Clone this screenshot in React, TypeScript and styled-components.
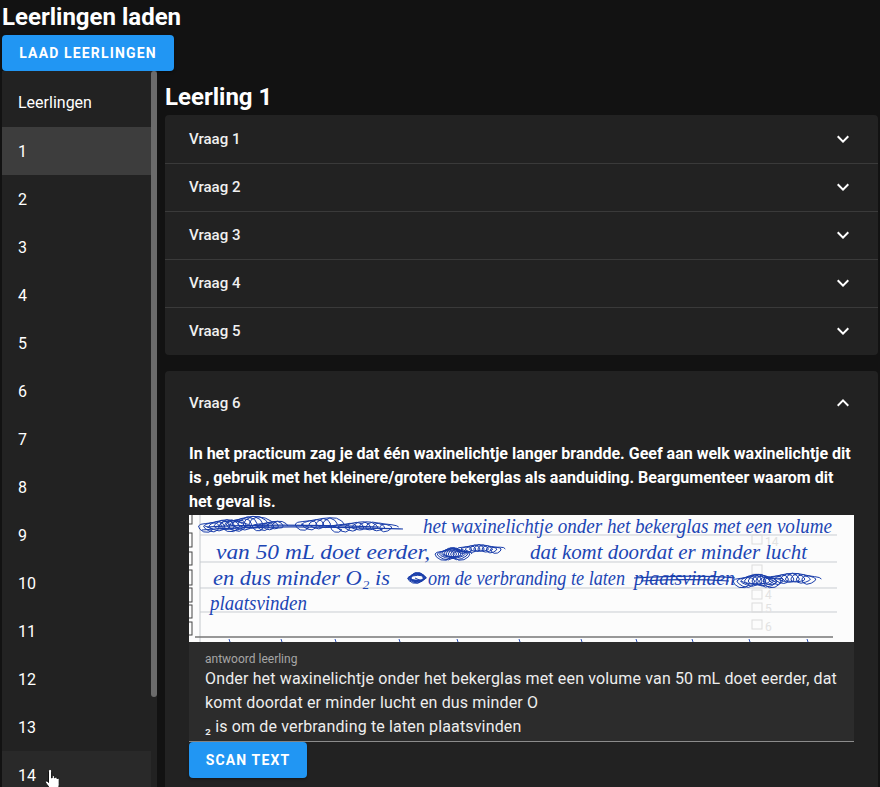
import { createGlobalStyle, styled } from "styled-components";

const GlobalStyle = createGlobalStyle`
  html, body {
    margin: 0;
    height: 100%;
    background: #121212;
    color: #fff;
    font-family: Roboto, "Liberation Sans", sans-serif;
    overflow: hidden;
  }
  * { box-sizing: border-box; }
`;

const Page = styled.div`
  position: relative;
  height: 787px;
  padding: 1px 2px 0;
  overflow: hidden;
  display: flex;
  flex-direction: column;
`;

const Title = styled.h1`
  margin: 0 0 2px;
  font-size: 24px;
  line-height: 32px;
  font-weight: 700;
`;

const Button = styled.button<{ $width: number }>`
  display: block;
  flex: none;
  width: ${({ $width }) => $width}px;
  height: 36px;
  padding: 0;
  border: 0;
  border-radius: 4px;
  background: #2196f3;
  color: #fff;
  font-family: inherit;
  font-size: 14px;
  font-weight: 700;
  letter-spacing: 1.15px;
  text-transform: uppercase;
  box-shadow: 0 1px 3px rgba(0, 0, 0, 0.4);
`;

const Body = styled.div`
  flex: 1;
  min-height: 0;
  display: flex;
  gap: 8px;
`;

const Sidebar = styled.nav`
  flex: none;
  width: 155px;
  height: 716px;
  display: flex;
  background: #222;
`;

const StudentList = styled.ul`
  flex: 1;
  min-width: 0;
  margin: 0;
  padding: 8px 0 0;
  list-style: none;
  overflow: hidden;
`;

const ScrollRail = styled.div`
  flex: none;
  width: 6px;
`;

const ScrollThumb = styled.div`
  height: 626px;
  border-radius: 3px;
  background: #6b6b6b;
`;

const SidebarHeader = styled.li`
  height: 48px;
  padding: 0 0 2px 16px;
  display: flex;
  align-items: center;
  font-size: 16px;
`;

const SidebarItem = styled.li<{ $selected?: boolean; $hover?: boolean }>`
  height: 48px;
  padding-left: 16px;
  display: flex;
  align-items: center;
  font-size: 16px;
  background: ${({ $selected, $hover }) =>
    $selected ? "#3d3d3d" : $hover ? "#292929" : "transparent"};
`;

const Main = styled.main`
  flex: 1;
  min-width: 0;
  padding-top: 10px;
`;

const StudentTitle = styled.h2`
  margin: 0 0 2px;
  font-size: 24px;
  line-height: 32px;
  font-weight: 700;
`;

const AccordionGroup = styled.div`
  margin-bottom: 16px;
  border-radius: 4px;
  background: #222;
  overflow: hidden;
`;

const Row = styled.div<{ $divider?: boolean; $open?: boolean }>`
  height: ${({ $open }) => ($open ? 64 : 48)}px;
  padding: 0 24px;
  padding-bottom: ${({ $divider }) => ($divider ? 1 : 0)}px;
  display: flex;
  align-items: center;
  justify-content: space-between;
  font-size: 15px;
  font-weight: 500;
  color: #f0f0f0;
  border-top: ${({ $divider }) =>
    $divider ? "1px solid #3a3a3a" : "0 none"};
`;

const Chevron = styled.svg`
  width: 24px;
  height: 24px;
  margin-right: -1px;
  fill: #fff;
`;

const OpenPanel = styled.section`
  background: #222;
  border-radius: 4px 4px 0 0;
  min-height: 440px;
`;

const Details = styled.div`
  padding: 7px 24px 16px;
`;

const Question = styled.p`
  margin: 0 0 1px;
  font-size: 16px;
  line-height: 24px;
  font-weight: 700;
`;

const Scan = styled.svg`
  display: block;
  width: 665px;
  height: 127px;
  background: #fcfcfc;
`;

const AnswerField = styled.div`
  height: 100px;
  padding: 10px 16px 0;
  background: #2c2c2c;
  border-bottom: 1px solid #8c8c8c;
  overflow: hidden;
`;

const AnswerLabel = styled.div`
  font-size: 12px;
  line-height: 15px;
  color: #a6a6a6;
`;

const AnswerText = styled.div`
  font-size: 16px;
  line-height: 24px;
  letter-spacing: 0.15px;
  color: #eee;
  white-space: pre-wrap;
`;

const Cursor = styled.svg`
  position: absolute;
  left: 44px;
  top: 768px;
  width: 18px;
  height: 24px;
`;

const ExpandMore = () => (
  <Chevron viewBox="0 0 24 24">
    <path d="M16.59 8.59 12 13.17 7.41 8.59 6 10l6 6 6-6z" />
  </Chevron>
);

const ExpandLess = () => (
  <Chevron viewBox="0 0 24 24">
    <path d="m12 8-6 6 1.41 1.41L12 10.83l4.59 4.58L18 14z" />
  </Chevron>
);

// looping pen strokes for the crossed out words on the scan
function scribble(x: number, y: number, w: number, h: number, loops: number) {
  let d = `M${x} ${y}`;
  const steps = loops * 10;
  for (let i = 1; i <= steps; i++) {
    const t = i / steps;
    const a = (i / 10) * Math.PI * 2;
    const px = x + w * t + Math.cos(a) * (h * 0.7);
    const py = y + Math.sin(a) * (h / 2) * (0.7 + 0.3 * Math.sin(i * 0.7));
    d += ` L${px.toFixed(1)} ${py.toFixed(1)}`;
  }
  return d;
}

const ruledLines = [20, 47, 73, 97];
const marginBoxes = [
  [-4, 13],
  [18, 14],
  [37, 13],
  [55, 15],
  [73, 14],
  [90, 13],
  [107, 13],
];
const faintBoxes = [20, 50, 75, 88, 105];
const faintNumbers = [
  { y: 31, label: "14" },
  { y: 84, label: "4" },
  { y: 98, label: "5" },
  { y: 116, label: "6" },
];
const letterTops = [40, 92, 146, 210, 268, 330, 392, 447, 503, 560, 618];

const handwriting = [
  { x: 234, y: 18, w: 409, text: "het waxinelichtje onder het bekerglas met een volume" },
  { x: 27, y: 44, w: 214, text: "van 50 mL doet eerder," },
  { x: 341, y: 44, w: 277, text: "dat komt doordat er minder lucht" },
  { x: 24, y: 70, w: 177, text: "en dus minder O₂ is" },
  { x: 239, y: 70, w: 197, text: "om de verbranding te laten" },
  { x: 445, y: 70, w: 101, text: "plaatsvinden" },
  { x: 21, y: 95, w: 97, text: "plaatsvinden" },
];

const scribbles = [
  scribble(16, 11, 36, 13, 7),
  scribble(40, 9, 34, 16, 6),
  scribble(68, 11, 24, 10, 5),
  scribble(112, 9, 34, 13, 5),
  scribble(146, 12, 56, 11, 8),
  scribble(254, 39, 20, 13, 9),
  scribble(272, 34, 38, 9, 9),
  scribble(226, 63, 4, 11, 7),
  scribble(552, 66, 34, 14, 9),
  scribble(580, 64, 44, 12, 8),
];

const strikes = [
  "M13 15 C70 10 140 12 214 14",
  "M18 12 C70 9 130 10 190 12",
  "M445 63 C480 61 520 60 546 63",
  "M452 66 C490 64 510 64 540 66",
];

const AnswerScan = () => (
  <Scan viewBox="0 0 665 127">
    {ruledLines.map((y) => (
      <line key={y} x1="11" x2="648" y1={y} y2={y} stroke="#c9cdd2" />
    ))}
    <line x1="11" x2="11" y1="0" y2="127" stroke="#c4c8cc" />
    <line x1="6" x2="644" y1="122" y2="122" stroke="#777" strokeWidth="1.5" />
    {marginBoxes.map(([y, h]) => (
      <rect key={y} x="-3" y={y} width="6" height={h} fill="none" stroke="#444" />
    ))}
    {faintBoxes.map((y) => (
      <rect key={y} x="563" y={y} width="10" height="9" fill="none" stroke="#dcdcdc" />
    ))}
    {faintNumbers.map((n) => (
      <text key={n.label} x="576" y={n.y} fontFamily="Roboto, sans-serif" fontSize="12" fill="#e2e2e2">
        {n.label}
      </text>
    ))}
    {letterTops.map((x) => (
      <line key={x} x1={x} x2={x + 1} y1="124" y2="127" stroke="#2a4fb8" />
    ))}
    {handwriting.map((line) => (
      <text
        key={line.x + line.text}
        x={line.x}
        y={line.y}
        textLength={line.w}
        lengthAdjust="spacingAndGlyphs"
        fontFamily='"Liberation Serif", serif'
        fontStyle="italic"
        fontSize="21"
        fill="#1c46b4"
      >
        {line.text}
      </text>
    ))}
    {scribbles.map((d) => (
      <path key={d} d={d} fill="none" stroke="#1a3eab" strokeWidth="1" />
    ))}
    {strikes.map((d) => (
      <path key={d} d={d} fill="none" stroke="#1a3eab" strokeWidth="1.2" />
    ))}
  </Scan>
);

const students = Array.from({ length: 15 }, (_, i) => i + 1);
const closedQuestions = [1, 2, 3, 4, 5];

export default function App() {
  return (
    <Page>
      <GlobalStyle />
      <Title>Leerlingen laden</Title>
      <Button $width={172}>Laad leerlingen</Button>
      <Body>
        <Sidebar>
          <StudentList>
            <SidebarHeader>Leerlingen</SidebarHeader>
            {students.map((n) => (
              <SidebarItem key={n} $selected={n === 1} $hover={n === 14}>
                {n}
              </SidebarItem>
            ))}
          </StudentList>
          <ScrollRail>
            <ScrollThumb />
          </ScrollRail>
        </Sidebar>
        <Main>
          <StudentTitle>Leerling 1</StudentTitle>
          <AccordionGroup>
            {closedQuestions.map((n) => (
              <Row key={n} $divider={n > 1}>
                Vraag {n}
                <ExpandMore />
              </Row>
            ))}
          </AccordionGroup>
          <OpenPanel>
            <Row $open>
              Vraag 6
              <ExpandLess />
            </Row>
            <Details>
              <Question>
                In het practicum zag je dat één waxinelichtje langer brandde.
                Geef aan welk waxinelichtje dit is , gebruik met het
                kleinere/grotere bekerglas als aanduiding. Beargumenteer waarom
                dit het geval is.
              </Question>
              <AnswerScan />
              <AnswerField>
                <AnswerLabel>antwoord leerling</AnswerLabel>
                <AnswerText>
                  {"Onder het waxinelichtje onder het bekerglas met een volume van 50 mL doet eerder, dat komt doordat er minder lucht en dus minder O\n₂ is om de verbranding te laten plaatsvinden"}
                </AnswerText>
              </AnswerField>
              <Button $width={118}>Scan text</Button>
            </Details>
          </OpenPanel>
        </Main>
      </Body>
      <Cursor viewBox="0 0 18 24">
        <path
          d="M6 1.5c1 0 1.6.7 1.6 1.7V10l.6-.2V8.600c0-1.500 2-1.500 2.200 0v1.200l.5.100c.2-1.300 2-1.200 2.200.100v.8c.3-1 2-.9 2.100.4v5.400c0 2.300-1 3.400-1.600 4.900H6.300c-.8-2-3-4.400-4.600-6.600-.8-1.200.7-2.500 1.800-1.500l1 1.100V3.200C4.500 2.200 5.100 1.500 6 1.500z"
          fill="#fff"
          stroke="#111"
          strokeWidth="1"
        />
      </Cursor>
    </Page>
  );
}
